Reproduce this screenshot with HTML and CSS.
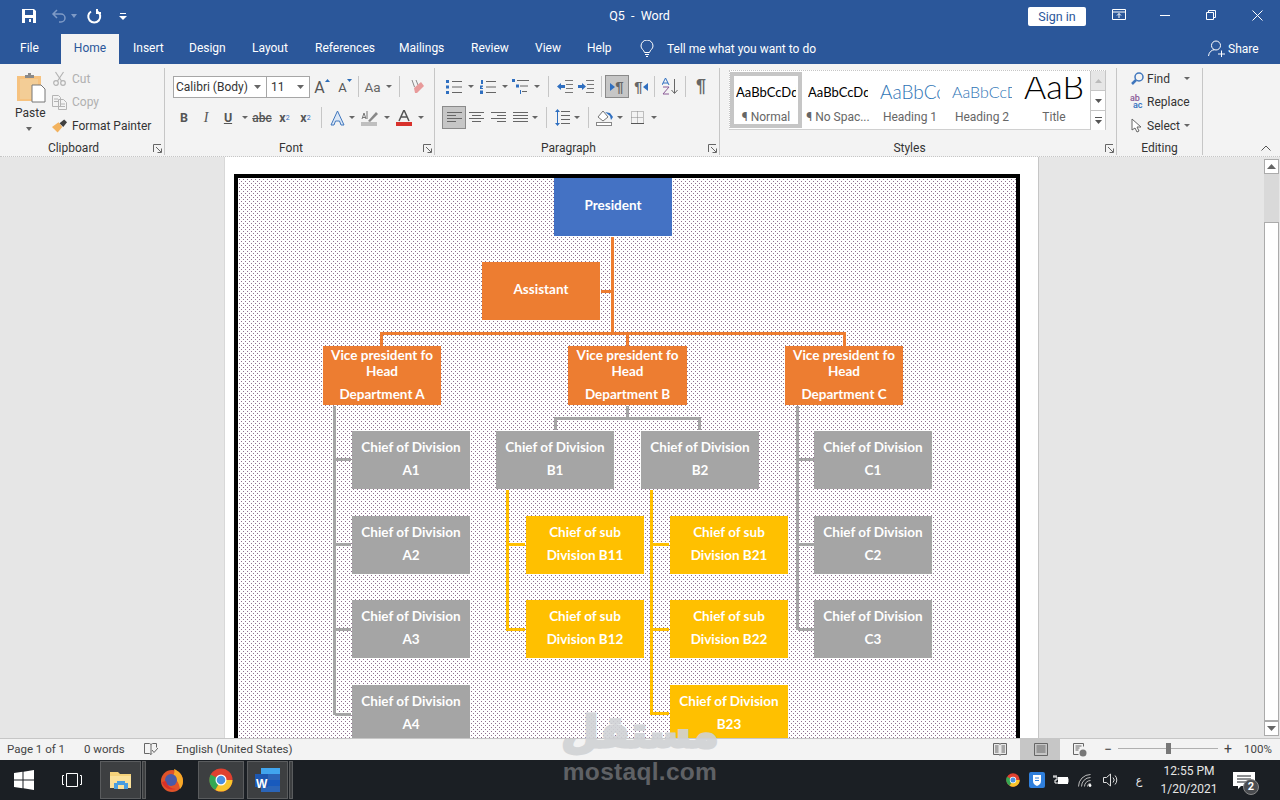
FILE: index.html
```html
<!DOCTYPE html>
<html lang="en">
<head>
<meta charset="utf-8">
<title>Q5 - Word</title>
<link rel="stylesheet" href="styles.css">
</head>
<body>
<div class="app">
  <header class="titlebar">
    <div class="qat">
      <svg width="16" height="16" viewBox="0 0 16 16"><path d="M1 1h12l2 2v12H1z" fill="#fff"/><rect x="4" y="2" width="8" height="5" fill="#2b579a"/><rect x="4" y="10" width="8" height="5" fill="#2b579a"/><rect x="8" y="11" width="2" height="3" fill="#fff"/></svg>
      <svg class="q-undo" width="16" height="16" viewBox="0 0 16 16" fill="none" stroke="#7f9bc6" stroke-width="1.5"><path d="M6 2 2 6l4 4M2 6h8a4 4 0 0 1 0 8H8"/></svg>
      <svg class="q-caret" width="6" height="4" viewBox="0 0 6 4"><path d="M0 0h6L3 4z" fill="#7f9bc6"/></svg>
      <svg class="q-redo" width="16" height="16" viewBox="0 0 16 16" fill="none" stroke="#fff" stroke-width="2"><path d="M5 3.500a6 6 0 1 0 6.500 0M11 1v4h4"/></svg>
      <svg class="q-more" width="8" height="7" viewBox="0 0 8 7"><path d="M1 0h6v1H1zM0 3h8L4 7z" fill="#fff"/></svg>
    </div>
    <div class="doc-title">Q5&nbsp; -&nbsp; Word</div>
    <div class="signin">Sign in</div>
    <div class="winbtns">
      <svg width="14" height="12" viewBox="0 0 14 12" fill="none" stroke="#fff"><path d="M.5.500h13v10H.5zM.5 3h13M7 9V4.500M5 6.500l2-2 2 2"/></svg>
      <svg width="10" height="10" viewBox="0 0 10 10" stroke="#fff"><path d="M0 5.500h10"/></svg>
      <svg width="10" height="10" viewBox="0 0 10 10" fill="none" stroke="#fff"><path d="M.5 2.500h7v7h-7zM2.500 2.500v-2h7v7h-2"/></svg>
      <svg width="11" height="11" viewBox="0 0 11 11" stroke="#fff"><path d="M.5.500l10 10M10.500.500l-10 10"/></svg>
    </div>
  </header>

  <nav class="tabs">
    <span class="tab tab-file">File</span>
    <span class="tab tab-home">Home</span>
    <span class="tab">Insert</span>
    <span class="tab">Design</span>
    <span class="tab">Layout</span>
    <span class="tab">References</span>
    <span class="tab">Mailings</span>
    <span class="tab">Review</span>
    <span class="tab">View</span>
    <span class="tab">Help</span>
    <div class="tellme">
      <svg width="14" height="18" viewBox="0 0 14 18" fill="none" stroke="#fff"><path d="M4.500 12.500C4 10 1 9 1 6a6 6 0 0 1 12 0c0 3-3 4-3.500 6.500zM5 14.500h4M6 16.500h2"/></svg>
      <span>Tell me what you want to do</span>
    </div>
    <div class="share">
      <svg width="17" height="17" viewBox="0 0 17 17" fill="none" stroke="#fff"><circle cx="8" cy="5.500" r="4.500"/><path d="M.5 16c.5-4 3-6 6-6.300M10 14h7M13.500 10.500v6.500"/></svg>
      <span>Share</span>
    </div>
  </nav>

  <section class="ribbon">
    <div class="group g-clip">
      <div class="gbody clip-body">
        <div class="paste">
          <svg width="29" height="31" viewBox="0 0 29 31"><rect x="0" y="4" width="24" height="25" fill="#f6c27f"/><path d="M3 7h18v20H3z" fill="#f3cd96"/><path d="M8 3h3V1h3v2h3v3H8z" fill="#8a8a8a"/><path d="M15 13h9l4 4v13H15z" fill="#fff" stroke="#777"/></svg>
          <span>Paste</span>
          <svg width="6" height="4" viewBox="0 0 6 4"><path d="M0 0h6L3 4z" fill="#666"/></svg>
        </div>
        <div class="clip-list">
          <div class="clip-row dim"><svg width="14" height="15" viewBox="0 0 14 15" fill="none" stroke="#b4b4b4" stroke-width="1.200"><path d="M3 1l6 9M11 1L5 10"/><circle cx="3.500" cy="12" r="2.300"/><circle cx="10.500" cy="12" r="2.300"/></svg><span>Cut</span></div>
          <div class="clip-row dim"><svg width="15" height="15" viewBox="0 0 15 15" fill="none" stroke="#b4b4b4"><path d="M.5.500h6l2 2v9h-8zM6.500 4.500h5l3 3v7h-8zM2 4h4M2 6.500h4M8 9h5M8 11.500h5"/></svg><span>Copy</span></div>
          <div class="clip-row"><svg width="16" height="14" viewBox="0 0 16 14"><path d="M0 8l7-5 4 5-5 6z" fill="#f2b25e"/><path d="M8 4l5-4 3 3-4 5z" fill="#404040"/></svg><span>Format Painter</span></div>
        </div>
      </div>
      <div class="glabel"><i></i><span>Clipboard</span><svg class="launch" width="9" height="9" viewBox="0 0 9 9" fill="none" stroke="#666"><path d="M.5 8V.5H8M3 3l5 5M4.500 8.500h4v-4"/></svg></div>
    </div>

    <div class="group g-font">
      <div class="gbody">
        <div class="tools font-r1">
          <div class="combo"><span>Calibri (Body)</span><svg width="7" height="4" viewBox="0 0 7 4"><path d="M0 0h7L3.500 4z" fill="#666"/></svg></div>
          <div class="combo combo-size"><span>11</span><svg width="7" height="4" viewBox="0 0 7 4"><path d="M0 0h7L3.500 4z" fill="#666"/></svg></div>
          <span class="t glyph-a">A<svg width="5" height="3" viewBox="0 0 5 3"><path d="M2.500 0L5 3H0z" fill="#2b6cb8"/></svg></span>
          <span class="t glyph-a small">A<svg width="5" height="3" viewBox="0 0 5 3"><path d="M0 0h5L2.500 3z" fill="#2b6cb8"/></svg></span>
          <i class="vsep"></i>
          <span class="t aa">Aa<svg width="6" height="3" viewBox="0 0 6 3"><path d="M0 0h6L3 3z" fill="#666"/></svg></span>
          <i class="vsep"></i>
          <span class="t"><svg width="16" height="16" viewBox="0 0 16 16"><path d="M3 1l2.500 7M7 1l2 5" stroke="#888" fill="none"/><path d="M5 9l7-6 3 4-7 7H6z" fill="#e89a9a"/></svg></span>
        </div>
        <div class="tools font-r2">
          <b class="t fmt">B</b>
          <em class="t fmt">I</em>
          <u class="t fmt">U</u>
          <svg class="car" width="6" height="3" viewBox="0 0 6 3"><path d="M0 0h6L3 3z" fill="#666"/></svg>
          <span class="t abc">abc</span>
          <span class="t fmt">x<sub>2</sub></span>
          <span class="t fmt">x<sup>2</sup></span>
          <i class="vsep"></i>
          <span class="t"><svg width="15" height="16" viewBox="0 0 15 16"><path d="M1 15L7.500 1 14 15h-3l-1.500-4h-4L4 15z" fill="#dbe7f6" stroke="#3f76bd"/></svg></span>
          <svg class="car" width="6" height="3" viewBox="0 0 6 3"><path d="M0 0h6L3 3z" fill="#666"/></svg>
          <span class="t"><svg width="17" height="16" viewBox="0 0 17 16"><rect y="12" width="16" height="4" fill="#bfbfbf"/><path d="M7 11l8-9 2 2-8 8z" fill="#888"/><path d="M1 9l2-6 2 6M1.500 7.500h3M6 1v8" stroke="#777" fill="none"/></svg></span>
          <svg class="car" width="6" height="3" viewBox="0 0 6 3"><path d="M0 0h6L3 3z" fill="#666"/></svg>
          <span class="t"><svg width="16" height="16" viewBox="0 0 16 16"><path d="M3 11L8 0l5 11M5 7h6" fill="none" stroke="#555" stroke-width="1.500"/><rect y="12" width="16" height="4" fill="#d8312c"/></svg></span>
          <svg class="car" width="6" height="3" viewBox="0 0 6 3"><path d="M0 0h6L3 3z" fill="#666"/></svg>
        </div>
      </div>
      <div class="glabel"><i></i><span>Font</span><svg class="launch" width="9" height="9" viewBox="0 0 9 9" fill="none" stroke="#666"><path d="M.5 8V.5H8M3 3l5 5M4.500 8.500h4v-4"/></svg></div>
    </div>

    <div class="group g-para">
      <div class="gbody">
        <div class="tools para-r1">
          <span class="t"><svg width="16" height="14" viewBox="0 0 16 14"><path d="M6 1.500h10M6 7h10M6 12.500h10" stroke="#666"/><path d="M0 0h3v3H0zM0 5.500h3v3H0zM0 11h3v3H0z" fill="#2f6fc0"/></svg></span>
          <svg class="car" width="6" height="3" viewBox="0 0 6 3"><path d="M0 0h6L3 3z" fill="#666"/></svg>
          <span class="t"><svg width="16" height="14" viewBox="0 0 16 14"><path d="M6 1.500h10M6 7h10M6 12.500h10" stroke="#666"/><path d="M1 0h2v4H1zM0 5.500h3v1L1 8h2v1H0zM0 10.500h3v4H0z" fill="#2f6fc0"/></svg></span>
          <svg class="car" width="6" height="3" viewBox="0 0 6 3"><path d="M0 0h6L3 3z" fill="#666"/></svg>
          <span class="t"><svg width="17" height="15" viewBox="0 0 17 15"><path d="M5 1.500h12M8 7h8M10 12.500h5" stroke="#666"/><path d="M0 0h3v3H0zM4 5.500h3v3H4z" fill="#2f6fc0"/><path d="M8 11h1v4H8z" fill="#2f6fc0"/></svg></span>
          <svg class="car" width="6" height="3" viewBox="0 0 6 3"><path d="M0 0h6L3 3z" fill="#666"/></svg>
          <i class="vsep"></i>
          <span class="t"><svg width="16" height="13" viewBox="0 0 16 13"><path d="M8 .5h8M9 4.500h7M9 8.500h7M8 12.500h8" stroke="#777"/><path d="M0 6.500L4 3v2h4v3H4v2z" fill="#2f6fc0"/></svg></span>
          <span class="t"><svg width="16" height="13" viewBox="0 0 16 13"><path d="M8 .5h8M9 4.500h7M9 8.500h7M8 12.500h8" stroke="#777"/><path d="M8 6.500L4 3v2H0v3h4v2z" fill="#2f6fc0"/></svg></span>
          <i class="vsep"></i>
          <span class="t active pil"><svg width="5" height="8" viewBox="0 0 5 8"><path d="M0 0l5 4-5 4z" fill="#2f6fc0"/></svg>¶</span>
          <span class="t pil">¶<svg width="5" height="8" viewBox="0 0 5 8"><path d="M5 0L0 4l5 4z" fill="#2f6fc0"/></svg></span>
          <i class="vsep"></i>
          <span class="t"><svg width="16" height="17" viewBox="0 0 16 17"><path d="M3.500 0L0 7M3.500 0L7 7M1 5h5" fill="none" stroke="#2f6fc0"/><path d="M1 9h6L1 16h6" fill="none" stroke="#8a5a96"/><path d="M12.500 1v14M9.500 12l3 3.500 3-3.500" fill="none" stroke="#666"/></svg></span>
          <i class="vsep"></i>
          <span class="t pilcrow">¶</span>
        </div>
        <div class="tools para-r2">
          <span class="t active"><svg width="15" height="11" viewBox="0 0 15 11"><path d="M0 .5h15M0 3.500h9M0 6.500h15M0 9.500h9" stroke="#666"/></svg></span>
          <span class="t"><svg width="15" height="11" viewBox="0 0 15 11"><path d="M0 .5h15M3 3.500h9M0 6.500h15M3 9.500h9" stroke="#666"/></svg></span>
          <span class="t"><svg width="15" height="11" viewBox="0 0 15 11"><path d="M0 .5h15M6 3.500h9M0 6.500h15M6 9.500h9" stroke="#666"/></svg></span>
          <span class="t"><svg width="15" height="11" viewBox="0 0 15 11"><path d="M0 .5h15M0 3.500h15M0 6.500h15M0 9.500h15" stroke="#666"/></svg></span>
          <svg class="car" width="6" height="3" viewBox="0 0 6 3"><path d="M0 0h6L3 3z" fill="#666"/></svg>
          <i class="vsep"></i>
          <span class="t"><svg width="15" height="17" viewBox="0 0 15 17"><path d="M6 2.500h9M6 6.500h9M6 10.500h9M6 14.500h9" stroke="#666"/><path d="M2.500 2v13" stroke="#2f6fc0"/><path d="M2.500 0L5 3H0zM2.500 17L0 14h5z" fill="#2f6fc0"/></svg></span>
          <svg class="car" width="6" height="3" viewBox="0 0 6 3"><path d="M0 0h6L3 3z" fill="#666"/></svg>
          <i class="vsep"></i>
          <span class="t"><svg width="17" height="16" viewBox="0 0 17 16"><rect x=".5" y="12.500" width="15" height="3" fill="#fff" stroke="#888"/><path d="M2 7l5-6 5 6-5 4z" fill="#fff" stroke="#777"/><path d="M9 2l5 4 1 4 2-3-3-4z" fill="#2f6fc0"/></svg></span>
          <svg class="car" width="6" height="3" viewBox="0 0 6 3"><path d="M0 0h6L3 3z" fill="#666"/></svg>
          <span class="t"><svg width="13" height="13" viewBox="0 0 13 13" fill="none" stroke="#888" stroke-dasharray="1 1"><path d="M.5.500h12v12H.5zM6.500.500v12M.5 6.500h12"/><path d="M0 12.500h13" stroke="#555" stroke-dasharray="none"/></svg></span>
          <svg class="car" width="6" height="3" viewBox="0 0 6 3"><path d="M0 0h6L3 3z" fill="#666"/></svg>
        </div>
      </div>
      <div class="glabel"><i></i><span>Paragraph</span><svg class="launch" width="9" height="9" viewBox="0 0 9 9" fill="none" stroke="#666"><path d="M.5 8V.5H8M3 3l5 5M4.500 8.500h4v-4"/></svg></div>
    </div>

    <div class="group g-styles">
      <div class="gallery">
        <div class="style sel"><div class="sample">AaBbCcDd</div><div class="slabel">¶ Normal</div></div>
        <div class="style"><div class="sample">AaBbCcDd</div><div class="slabel">¶ No Spac...</div></div>
        <div class="style"><div class="sample h1">AaBbCc</div><div class="slabel">Heading 1</div></div>
        <div class="style"><div class="sample h2">AaBbCcD</div><div class="slabel">Heading 2</div></div>
        <div class="style"><div class="sample ttl">AaB</div><div class="slabel">Title</div></div>
        <div class="gscroll">
          <span class="gs gs-off"><svg width="7" height="4" viewBox="0 0 7 4"><path d="M3.500 0L7 4H0z" fill="#bbb"/></svg></span>
          <span class="gs"><svg width="7" height="4" viewBox="0 0 7 4"><path d="M0 0h7L3.500 4z" fill="#555"/></svg></span>
          <span class="gs"><svg width="7" height="7" viewBox="0 0 7 7"><path d="M0 0h7v1H0zM0 3h7L3.500 7z" fill="#555"/></svg></span>
        </div>
      </div>
      <div class="glabel"><i></i><span>Styles</span><svg class="launch" width="9" height="9" viewBox="0 0 9 9" fill="none" stroke="#666"><path d="M.5 8V.5H8M3 3l5 5M4.500 8.500h4v-4"/></svg></div>
    </div>

    <div class="group g-edit">
      <div class="edit-list">
        <div class="clip-row"><svg width="13" height="13" viewBox="0 0 13 13" fill="none" stroke="#3f76bd" stroke-width="1.500"><circle cx="8" cy="5" r="4"/><path d="M5 8l-4 4" stroke-width="2.500"/></svg><span>Find</span><svg class="ecar" width="6" height="3" viewBox="0 0 6 3"><path d="M0 0h6L3 3z" fill="#666"/></svg></div>
        <div class="clip-row"><span class="repl"><b>ab</b><b>ac</b></span><span>Replace</span></div>
        <div class="clip-row"><svg width="13" height="15" viewBox="0 0 13 15"><path d="M1 1v11l3-2 2 4 2-1-2-4h4z" fill="#fff" stroke="#666"/></svg><span>Select</span><svg class="ecar-s" width="6" height="3" viewBox="0 0 6 3"><path d="M0 0h6L3 3z" fill="#666"/></svg></div>
      </div>
      <div class="glabel edit-label"><span>Editing</span></div>
    </div>
    <svg class="collapse" width="10" height="6" viewBox="0 0 10 6" fill="none" stroke="#555"><path d="M.5 5.500L5 1l4.500 4.500"/></svg>
  </section>

  <main class="workspace">
    <div class="page">
      <div class="frame">
        <svg class="lines" width="778" height="600" viewBox="0 0 778 600" shape-rendering="crispEdges" fill="none" stroke-width="3">
          <defs><pattern id="dots" width="4" height="4" patternUnits="userSpaceOnUse"><rect x="1" y="1" width="1" height="1" fill="#8f708f"/><rect x="3" y="3" width="1" height="1" fill="#8f708f"/></pattern></defs>
          <rect width="778" height="600" fill="url(#dots)" stroke="none"/>
          <path stroke="#ed7d31" d="M374.500 59v96.500M363 113.500h10M143.500 168v-12.500h463V168M389.500 155.500V168"/>
          <path stroke="#a5a5a5" d="M389.500 228v12.500M317.500 252v-11.500h144V252M96.500 228v308.500M96.500 281.500H113M96.500 366.500H113M96.500 451.500H113M96.500 536.500H113M559.500 228v223.500M559.500 281.500h16M559.500 366.500h16M559.500 451.500h16"/>
          <path stroke="#ffc000" d="M269.500 312v139.500H287M269.500 366.500H287M413.500 312v223.500H431M413.500 366.500H431M413.500 451.500H431"/>
        </svg>
        <div class="node blue n-pres"><p class="single">President</p></div>
        <div class="node orange n-asst"><p class="single">Assistant</p></div>
        <div class="node orange vp vp-a"><p>Vice president fo</p><p>Head</p><p class="dept">Department A</p></div>
        <div class="node orange vp vp-b"><p>Vice president fo</p><p>Head</p><p class="dept">Department B</p></div>
        <div class="node orange vp vp-c"><p>Vice president fo</p><p>Head</p><p class="dept">Department C</p></div>
        <div class="node gray col-a row-1"><p>Chief of Division</p><p>A1</p></div>
        <div class="node gray col-a row-2"><p>Chief of Division</p><p>A2</p></div>
        <div class="node gray col-a row-3"><p>Chief of Division</p><p>A3</p></div>
        <div class="node gray col-a row-4"><p>Chief of Division</p><p>A4</p></div>
        <div class="node gray col-b1 row-1"><p>Chief of Division</p><p>B1</p></div>
        <div class="node gray col-b2 row-1"><p>Chief of Division</p><p>B2</p></div>
        <div class="node gray col-c row-1"><p>Chief of Division</p><p>C1</p></div>
        <div class="node gray col-c row-2"><p>Chief of Division</p><p>C2</p></div>
        <div class="node gray col-c row-3"><p>Chief of Division</p><p>C3</p></div>
        <div class="node gold col-s1 row-2"><p>Chief of sub</p><p>Division B11</p></div>
        <div class="node gold col-s1 row-3"><p>Chief of sub</p><p>Division B12</p></div>
        <div class="node gold col-s2 row-2"><p>Chief of sub</p><p>Division B21</p></div>
        <div class="node gold col-s2 row-3"><p>Chief of sub</p><p>Division B22</p></div>
        <div class="node gold col-s2 row-4"><p>Chief of Division</p><p>B23</p></div>
      </div>
    </div>
    <div class="vscroll">
      <span class="vbtn"><svg width="9" height="5" viewBox="0 0 9 5"><path d="M4.500 0L9 5H0z" fill="#666"/></svg></span>
      <span class="vtrack"></span>
      <span class="vthumb"></span>
      <span class="vbtn"><svg width="9" height="5" viewBox="0 0 9 5"><path d="M0 0h9L4.500 5z" fill="#666"/></svg></span>
    </div>
  </main>

  <footer class="status">
    <span class="st-page">Page 1 of 1</span>
    <span class="st-words">0 words</span>
    <svg class="st-book" width="14" height="14" viewBox="0 0 14 14" fill="none" stroke="#666"><path d="M.5 1.500h5l1.500 1v10l-1.500-1h-5zM7 2.500l1.500-1h4v4M7 12.500l1-1M8 8l2 2.500L14 6"/></svg>
    <span class="st-lang">English (United States)</span>
    <div class="views">
      <svg width="14" height="13" viewBox="0 0 14 13" fill="#e8e8e8" stroke="#666"><path d="M.5.500h6l.5 1 .5-1h6v11h-6l-.5 1-.5-1h-6zM2 3h3.500M2 5h3.500M2 7h3.500M2 9h3.500M8.500 3H12M8.500 5H12M8.500 7H12M8.500 9H12"/></svg>
      <span class="view-on"><svg width="14" height="13" viewBox="0 0 14 13" fill="none" stroke="#666"><path d="M.5.500h13v12H.5zM2.500 3h9M2.500 5h9M2.500 7h9M2.500 9h9"/></svg></span>
      <svg width="14" height="14" viewBox="0 0 14 14" fill="none" stroke="#666"><path d="M.5.500h10v3M.5.500v11h5M2.500 3h6M2.500 5h4M2.500 7h3"/><circle cx="10" cy="10" r="3.500" fill="#777" stroke="none"/></svg>
    </div>
    <div class="zoomer">
      <span class="z-btn">−</span>
      <span class="z-track"><i></i></span>
      <span class="z-btn">+</span>
    </div>
    <span class="st-pct">100%</span>
  </footer>

  <div class="taskbar">
    <span class="tb-cell"><svg width="20" height="20" viewBox="0 0 20 20" fill="#fff"><path d="M0 3l8.500-1.200v7.700H0zM9.500 1.700L20 0v9.500H9.500zM0 10.500h8.500v7.700L0 17zM9.500 10.500H20V20L9.500 18.300z"/></svg></span>
    <span class="tb-cell"><svg width="20" height="14" viewBox="0 0 20 14" fill="none" stroke="#fff"><path d="M4.500.5h11v13h-11zM2 2.500H.5v9H2M18 2.500h1.500v9H18"/></svg></span>
    <span class="tile t-exp"><svg width="22" height="18" viewBox="0 0 22 18"><path d="M0 1h8l2 2h11v14H0z" fill="#f5d27a"/><rect x="0" y="5" width="21" height="12" fill="#fbe19a"/><path d="M7 10h8v2h3v6H4v-6h3z" fill="#4a9ee0"/><rect x="8" y="14" width="6" height="4" fill="#fbe19a"/></svg></span>
    <span class="sliver"></span>
    <span class="tb-cell tb-fox"><svg width="24" height="24" viewBox="0 0 24 24"><circle cx="12" cy="13" r="11" fill="#e0532a"/><path d="M14 1c5 2 9 6 9 12 0 3-1 6-3 8-1-8-5-11-9-12 3-2 4-4 3-8z" fill="#f7a928"/><circle cx="11" cy="12" r="6" fill="#4a5aa8"/><path d="M2 14c2 6 8 9 14 7-5 0-9-3-10-8z" fill="#d9302a"/></svg></span>
    <span class="tile t-chrome"><svg width="24" height="24" viewBox="0 0 24 24"><circle cx="12" cy="12" r="11.500" fill="#e0402f"/><path d="M12 12L6.300 22A11.500 11.500 0 0 1 1.700 6.500z" fill="#34a853"/><path d="M12 12h11.500A11.500 11.500 0 0 1 6.300 22z" fill="#f9c52c"/><circle cx="12" cy="12" r="5.500" fill="#fff"/><circle cx="12" cy="12" r="4.300" fill="#4a90e2"/></svg></span>
    <span class="tile t-word"><svg width="25" height="24" viewBox="0 0 25 24"><rect x="6" y="0" width="19" height="24" fill="#2b65b8"/><rect x="6" y="0" width="19" height="6" fill="#41a5ee"/><rect x="6" y="12" width="19" height="6" fill="#185abd"/><rect x="0" y="6" width="13" height="13" fill="#1d57b0"/></svg><b>W</b></span>
    <span class="sliver"></span>
    <div class="tray">
      <span><svg width="14" height="14" viewBox="0 0 24 24"><circle cx="12" cy="12" r="11.500" fill="#e0402f"/><path d="M12 12L6.300 22A11.500 11.500 0 0 1 1.700 6.500z" fill="#34a853"/><path d="M12 12h11.500A11.500 11.500 0 0 1 6.300 22z" fill="#f9c52c"/><circle cx="12" cy="12" r="5.500" fill="#fff"/><circle cx="12" cy="12" r="4.300" fill="#4a90e2"/></svg></span>
      <span><svg width="16" height="16" viewBox="0 0 16 16"><rect width="16" height="16" rx="2" fill="#2f7fdc"/><path d="M4 3h8v6c0 3-2 4-4 5-2-1-4-2-4-5z" fill="#fff"/><path d="M6 6h4M6 8.500h4" stroke="#2f7fdc"/></svg></span>
      <span><svg width="16" height="11" viewBox="0 0 16 11"><path d="M1 2V0M3 2V0M0 2h4v3H2v3h3" fill="none" stroke="#fff"/><path d="M5 2h10v7H5z" fill="#fff"/><path d="M15.500 3.500h.5v4h-.5z" fill="#fff"/></svg></span>
      <span><svg width="15" height="13" viewBox="0 0 15 13" fill="none" stroke="#bbb"><path d="M.5 12.500A12 12 0 0 1 12.500.5M3.500 12.500a9 9 0 0 1 9-9M6.500 12.500a6 6 0 0 1 6-6M9.500 12.500a3 3 0 0 1 3-3"/><circle cx="12" cy="11.500" r="1.400" fill="#fff" stroke="none"/></svg></span>
      <span><svg width="15" height="14" viewBox="0 0 15 14" fill="none" stroke="#ddd"><path d="M.5 4.500h3L7.500 1v12l-4-3.500h-3zM10 4.500a3.500 3.500 0 0 1 0 5M12 2.500a6.500 6.500 0 0 1 0 9"/></svg></span>
      <span class="tray-lang">ع</span>
      <div class="clock"><span>12:55 PM</span><span>1/20/2021</span></div>
      <span class="notif"><svg width="22" height="17" viewBox="0 0 22 17"><path d="M0 0h22v14H8l-3 3v-3H0z" fill="#fff"/><path d="M4 4h14M4 7h14M4 10h10" stroke="#1b1f24"/></svg><b>2</b></span>
    </div>
  </div>

  <div class="watermark" lang="ar"><span class="wm-ar">مستقل</span><span class="wm-en">mostaql.com</span></div>
</div>
</body>
</html>
```
FILE: styles.css
```css
* { box-sizing: border-box; }
html, body { margin: 0; padding: 0; }
body { width: 1280px; height: 800px; overflow: hidden; font-family: Roboto, "Open Sans", sans-serif; font-size: 12px; color: #333; }
p { margin: 0; }
i, em { font-style: normal; }
svg { display: block; flex: none; }

.app { position: relative; width: 1280px; height: 800px; display: flex; flex-direction: column; background: #e6e6e6; overflow: hidden; }

/* Title bar */
.titlebar { height: 32px; background: #2b579a; display: grid; grid-template-columns: 590px 100px 338px 58px 1fr; align-items: center; color: #fff; flex: none; }
.qat { display: flex; align-items: center; padding-left: 21px; }
.q-undo { margin-left: 14px; }
.q-caret { margin-left: 4px; }
.q-redo { margin-left: 9px; }
.q-more { margin-left: 17px; }
.doc-title { grid-column: 2; text-align: center; font-size: 12.500px; line-height: 30px; margin-left: -1px; }
.signin { grid-column: 4; height: 19px; background: #fff; color: #2b579a; border-radius: 2px; text-align: center; line-height: 19px; font-size: 12.500px; }
.winbtns { display: grid; grid-template-columns: 46px 46px 46px 46px; align-items: center; justify-items: center; padding-left: 10px; margin-top: -2px; width: 194px; }

/* Tabs */
.tabs { height: 32px; background: #2b579a; flex: none; display: grid; grid-template-columns: 61px 58px 56px 63px 63px 84px 72px 64px 52px 53px 582px 1fr; align-items: end; color: #fff; font-size: 12px; }
.tab { height: 30px; line-height: 29px; padding-left: 14px; white-space: nowrap; }
.tab-file { padding-left: 20px; }
.tab-home { background: #f3f3f3; color: #2b579a; padding-left: 0; text-align: center; }
.tellme { display: flex; align-items: center; height: 30px; padding: 0 0 1px 14px; gap: 13px; }
.share { display: flex; align-items: center; height: 30px; gap: 3px; padding-bottom: 1px; }

/* Ribbon */
.ribbon { height: 93px; flex: none; background: #f3f3f3; display: flex; position: relative; border-bottom: 1px dotted #c6c6c6; color: #333; }
.group { display: flex; flex-direction: column; height: 87px; margin-top: 4px; border-right: 1px solid #c6c6c6; flex: none; }
.g-clip { width: 165px; }
.g-font { width: 270px; padding-left: 8px; }
.g-para { width: 285px; padding-left: 7px; }
.g-styles { width: 397px; padding-left: 9px; }
.g-edit { width: 86px; }
.gbody { height: 71px; display: flex; flex-direction: column; gap: 8px; padding-top: 7px; }
.glabel { margin-top: auto; height: 16px; display: grid; grid-template-columns: 0 1fr 11px; align-items: center; text-align: center; margin-left: -8px; position: relative; top: 1px; }
.glabel span { padding-right: 6px; }
.g-clip .glabel { margin-left: 0; }
.g-para .glabel { margin-left: -7px; }
.g-styles .glabel { margin-left: -9px; }
.edit-label { grid-template-columns: 1fr; margin-left: 0; }
.edit-label span { padding-right: 0; }
.launch { justify-self: start; }

.clip-body { flex-direction: row; gap: 0; padding-top: 0; }
.paste { width: 52px; padding-left: 17px; display: flex; flex-direction: column; align-items: flex-start; padding-top: 4px; }
.paste span { margin: 2px 0 0 -2px; width: 28px; text-align: center; line-height: 16px; }
.paste svg:last-child { margin: 6px 0 0 9px; }
.clip-list { display: flex; flex-direction: column; margin-top: -1px; }
.clip-row { display: flex; align-items: center; height: 23.500px; gap: 5px; white-space: nowrap; }
.clip-row.dim { color: #b0b0b0; }
.clip-row svg:first-child { width: 15px; }

.tools { display: grid; align-items: center; justify-items: center; height: 23px; }
.font-r1 { grid-template-columns: 94px 43px 24px 22px 4px 36px 6px 30px; }
.font-r2 { grid-template-columns: 22px 22px 22px 11px 24px 21px 21px 10px 22px 7px 28px 8px 26px 7px; }
.para-r1 { grid-template-columns: 23px 12px 22px 11px 21px 11px 12px 21px 22px 8px 24px 24px 3px 28px 3px 28px; }
.para-r2 { grid-template-columns: 24px 21px 22px 22px 8px 14px 19px 9px 14px 19px 11px 25px 8px; }
.t { display: flex; align-items: center; justify-content: center; height: 23px; width: 100%; }
.vsep { width: 1px; height: 21px; background: #c6c6c6; display: block; }
.active { background: #c6c6c6; border: 1px solid #8a8a8a; }

.combo { width: 100%; height: 22px; background: #fff; border: 1px solid #a6a6a6; display: flex; align-items: center; justify-content: space-between; padding: 0 5px 0 2px; white-space: nowrap; }
.combo-size { border-left: 0; padding-left: 4px; }
.glyph-a { font-size: 16px; color: #555; align-items: flex-end; line-height: 20px; }
.glyph-a svg { align-self: flex-start; margin-top: 4px; }
.glyph-a.small { font-size: 13px; }
.aa { font-size: 13.500px; color: #666; gap: 5px; }
.fmt { color: #555; font-family: Roboto, sans-serif; font-size: 12.500px; font-weight: 700; }
em.fmt { font-style: italic; font-family: "Liberation Serif", serif; font-weight: 400; font-size: 14px; }
.abc { text-decoration: line-through; color: #555; font-size: 12px; font-weight: 500; }
.fmt sub, .fmt sup { font-size: 7px; color: #2f6fc0; line-height: 0; font-weight: 400; }
.pil { color: #666; font-size: 15px; font-weight: 700; font-family: "Liberation Sans", sans-serif; }
.pilcrow { font-size: 18px; color: #666; font-family: "Liberation Sans", sans-serif; font-weight: 700; }

/* Styles gallery */
.gallery { display: flex; width: 377px; height: 60px; margin-top: 2px; background: #fff; border: 1px dotted #c6c6c6; border-right: 1px solid #c6c6c6; border-bottom: 1px solid #d0d0d0; padding-top: 1px; }
.style { width: 72px; height: 56px; display: flex; flex-direction: column; align-items: center; padding-top: 5px; font-family: Lato, sans-serif; flex: none; }
.sel { box-shadow: inset 0 0 0 4px #c6c6c6; }
.sample { width: 60px; height: 32px; line-height: 30px; overflow: hidden; white-space: nowrap; color: #000; font-size: 13px; }
.h1 { font-size: 19px; color: #2e74b5; font-weight: 300; }
.h2 { font-size: 16px; color: #2e74b5; font-weight: 300; }
.ttl { font-size: 34px; font-weight: 300; line-height: 18px; height: 27px; margin-bottom: 5px; text-align: center; }
.slabel { font-family: Roboto, sans-serif; font-size: 12px; color: #666; line-height: 16px; white-space: nowrap; }
.gscroll { width: 15px; margin-left: auto; display: flex; flex-direction: column; height: 59px; margin-top: -1px; border-left: 1px solid #c6c6c6; }
.gs { flex: 1; display: flex; align-items: center; justify-content: center; border-bottom: 1px solid #c6c6c6; background: #fff; }
.gs:last-child { border-bottom: 0; }
.gs-off { background: #e6e6e6; }

/* Editing */
.edit-list { height: 71px; margin-top: -3px; padding: 2px 0 0 13px; }
.edit-list .clip-row { gap: 2px; height: 23.500px; }
.ecar { margin-left: 12px; }
.ecar-s { margin-left: 2px; }
.repl { display: flex; flex-direction: column; font-size: 9px; line-height: 7px; width: 15px; color: #8a5a96; }
.repl b { font-weight: 500; }
.repl b:last-child { color: #2f6fc0; margin-left: 3px; }
.collapse { position: absolute; left: 1261px; top: 81px; }

/* Workspace */
.workspace { height: 581px; flex: none; display: flex; background: #e6e6e6; overflow: hidden; padding: 0 1px 0 224px; }
.page { width: 815px; background: #fff; border-right: 1px solid #c6c6c6; border-left: 1px solid #d8d8d8; padding: 17px 0 0 9px; flex: none; overflow: hidden; }
.frame { position: relative; width: 786px; height: 640px; border: 4px solid #000; border-bottom: 0; background: #fff; }
.lines { position: absolute; left: 0; top: 0; }
.node { position: absolute; width: 118px; height: 58px; color: #fff; text-align: center; font-family: Lato, sans-serif; font-weight: 700; font-size: 13.500px; line-height: 23px; padding-top: 5px; white-space: nowrap; }
.node .single { line-height: 44px; }
.blue { background: #4472c4; }
.orange { background: #ed7d31; }
.gray { background: #a5a5a5; }
.gold { background: #ffc000; }
.n-pres { left: 316px; top: 0; }
.n-asst { left: 244px; top: 84px; }
.vp { line-height: 16px; padding-top: 1px; height: 59px; }
.vp .dept { margin-top: 7px; }
.vp-a { left: 85px; top: 168px; }
.vp-b { left: 330px; top: 168px; width: 119px; }
.vp-c { left: 547px; top: 168px; }
.col-a { left: 114px; }
.col-b1 { left: 258px; }
.col-b2 { left: 403px; }
.col-c { left: 576px; }
.col-s1 { left: 288px; }
.col-s2 { left: 432px; }
.row-1 { top: 253px; }
.row-2 { top: 338px; }
.row-3 { top: 422px; }
.row-4 { top: 507px; }

.vscroll { margin-left: auto; width: 15px; display: flex; flex-direction: column; padding-top: 2px; flex: none; }
.vbtn { height: 15px; flex: none; background: #fff; border: 1px solid #ababab; display: flex; align-items: center; justify-content: center; }
.vtrack { height: 48px; flex: none; background: #d9d9d9; }
.vthumb { height: 499px; flex: none; background: #fff; border: 1px solid #ababab; }

/* Status bar */
.status { height: 22px; flex: none; background: #f3f3f3; border-top: 1px solid #c6c6c6; display: flex; align-items: center; font-size: 11.500px; color: #444; white-space: nowrap; padding-bottom: 2px; }
.st-page { margin-left: 7px; width: 77px; }
.st-words { width: 60px; }
.st-book { margin-right: 18px; }
.st-lang { width: 816px; }
.views { display: grid; grid-template-columns: 14px 14px 40px 13px 14px; align-items: center; height: 21px; margin-bottom: -2px; width: 94px; }
.views svg:first-child { grid-column: 1; margin-left: 1px; }
.view-on { grid-column: 3; background: #c6c6c6; height: 21px; display: flex; align-items: center; justify-content: center; }
.views svg:last-child { grid-column: 5; }
.zoomer { display: flex; align-items: center; margin-left: 18px; }
.z-btn { width: 8px; font-size: 14px; line-height: 14px; text-align: center; color: #444; }
.z-track { width: 100px; height: 1px; background: #b0b0b0; margin: 0 6px; position: relative; display: block; }
.z-track i { position: absolute; left: 48px; top: -5px; width: 5px; height: 11px; background: #777; display: block; }
.st-pct { margin-left: 12px; }

/* Taskbar */
.taskbar { height: 40px; flex: none; background: #1b1f24; display: flex; align-items: center; color: #fff; }
.tb-cell { width: 48px; height: 40px; display: flex; align-items: center; justify-content: center; flex: none; }
.tile { height: 38px; background: #3d3f41; border: 1px solid #5a5c5e; display: flex; align-items: center; justify-content: center; flex: none; position: relative; }
.t-exp { width: 41px; margin-left: 4px; }
.sliver { width: 4px; height: 38px; background: #3d3f41; border: 1px solid #5a5c5e; margin-left: 1px; flex: none; }
.tb-fox { margin-left: 2px; }
.t-chrome { width: 46px; margin-left: 2px; }
.t-word { width: 41px; margin-left: 3px; }
.t-word b { position: absolute; left: 8px; top: 15px; font: 700 12px "Liberation Sans", sans-serif; color: #fff; }
.tray { margin-left: auto; display: grid; grid-template-columns: 23px 25px 24px 25px 24px 34px 66px 46px 12px; align-items: center; justify-items: center; width: 279px; }
.tray-lang { font-family: "DejaVu Sans", sans-serif; font-size: 11px; color: #eee; }
.clock { display: flex; flex-direction: column; align-items: center; line-height: 18px; font-size: 12px; color: #e6e6e6; white-space: nowrap; }
.notif { position: relative; display: block; margin-left: -2px; }
.notif b { position: absolute; left: 10px; top: 7px; width: 16px; height: 16px; border-radius: 50%; background: #4a4c50; border: 1px solid #888; color: #fff; font: 700 11px/14px Roboto, sans-serif; text-align: center; }

/* Watermark */
.watermark { position: absolute; left: 553px; top: 704px; width: 174px; display: flex; flex-direction: column; align-items: center; pointer-events: none; }
.wm-ar { font: 700 43px/56px "DejaVu Sans", sans-serif; color: #d0d2d5; -webkit-text-stroke: 3px #d0d2d5; opacity: .9; }
.wm-en { font: 700 24.500px/24px "Liberation Sans", sans-serif; color: #5f6165; letter-spacing: .3px; }
```
